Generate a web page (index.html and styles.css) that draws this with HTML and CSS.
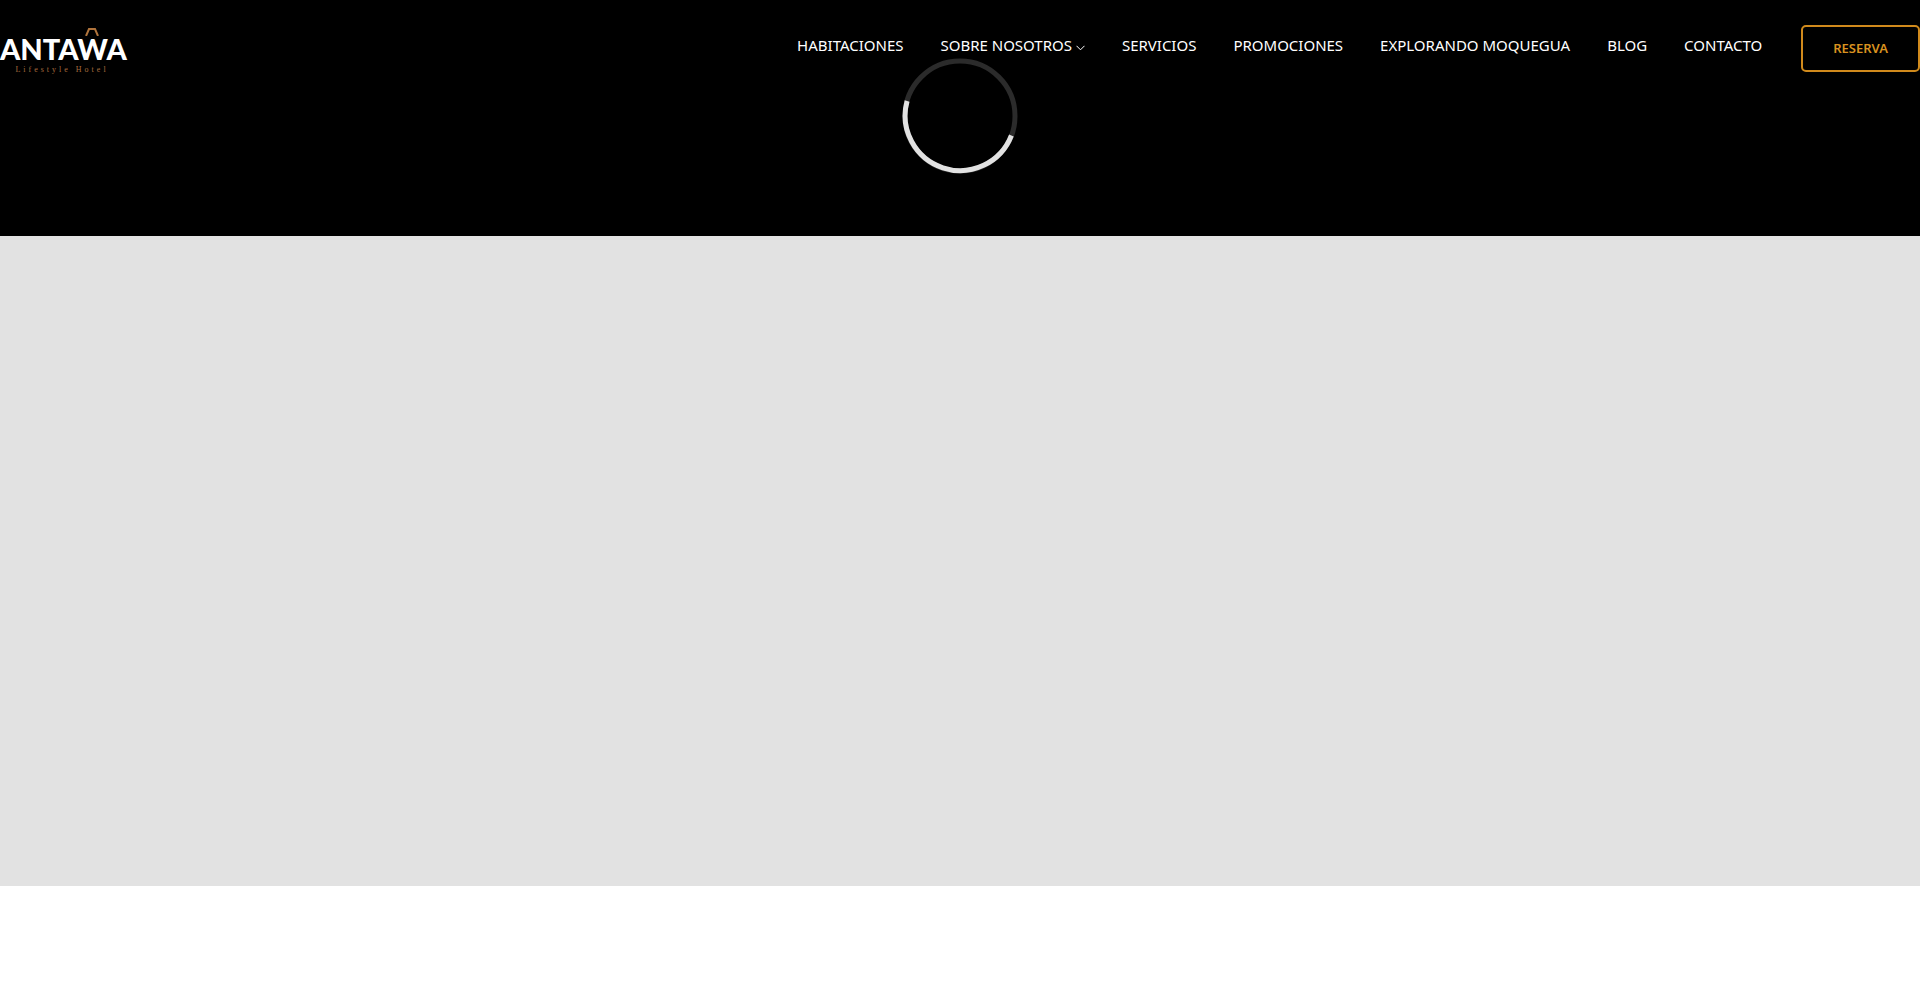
FILE: index.html
```html
<!DOCTYPE html>
<html lang="es">
<head>
  <meta charset="UTF-8">
  <meta name="viewport" content="width=device-width, initial-scale=1">
  <title>Antawa Lifestyle Hotel</title>
  <link rel="stylesheet" href="styles.css">
</head>
<body>
  <header class="header">
    <a class="logo" href="#" aria-label="Antawa Lifestyle Hotel">
      <svg class="logo-roof" viewBox="0 0 14 8" aria-hidden="true">
        <path d="M1 8L4 1H10L13 8"/>
      </svg>
      <span class="logo-name">ANTAWA</span>
      <span class="logo-tagline">Lifestyle Hotel</span>
    </a>
    <nav class="menu">
      <a href="#">HABITACIONES</a>
      <a href="#">SOBRE NOSOTROS
        <svg class="arrow" viewBox="0 0 9 6" aria-hidden="true"><path d="M0.5 0.8L4.5 4.8L8.5 0.8"/></svg>
      </a>
      <a href="#">SERVICIOS</a>
      <a href="#">PROMOCIONES</a>
      <a href="#">EXPLORANDO MOQUEGUA</a>
      <a href="#">BLOG</a>
      <a href="#">CONTACTO</a>
    </nav>
    <a class="reserva" href="#">RESERVA</a>
    <!-- loader -->
    <svg class="loader" viewBox="0 0 116 116" aria-hidden="true">
      <circle cx="58" cy="58" r="55"/>
      <path d="M5.1 43A55 55 0 0 0 109.4 77.5"/>
    </svg>
  </header>
  <main class="hero"></main>
</body>
</html>
```

FILE: styles.css
```css
body {
  margin: 0;
  background: #fff;
  font-family: "Noto Sans", sans-serif;
}
a {
  color: inherit;
  text-decoration: none;
}
.header {
  position: relative;
  display: flex;
  align-items: flex-start;
  box-sizing: border-box;
  min-height: 236px;
  padding-top: 25px;
  background: #000;
  color: #fff;
}
.logo {
  position: relative;
  display: flex;
  flex-direction: column;
  width: 124px;
  padding-top: 8px;
}
.logo-name {
  font-family: Lato, sans-serif;
  font-size: 29px;
  font-weight: 900;
  line-height: 32px;
}
.logo-tagline {
  color: #a86c3e;
  font-family: "Liberation Serif", serif;
  font-size: 8px;
  letter-spacing: 3px;
  line-height: 10px;
  text-align: center;
  white-space: nowrap;
}
.logo-roof {
  position: absolute;
  top: 3px;
  left: 85px;
  width: 14px;
  height: 8px;
  fill: none;
  stroke: #b0743c;
  stroke-width: 2;
}
.menu {
  display: flex;
  gap: 37px;
  margin-left: auto;
  margin-right: 39px;
  font-size: 15px;
  line-height: 40px;
}
.arrow {
  width: 9px;
  height: 6px;
  fill: none;
  stroke: #fff;
}
.reserva {
  padding: 0 30px;
  border: 2px solid #d08a1c;
  border-radius: 5px;
  color: #d9921f;
  font-size: 13px;
  font-weight: 600;
  line-height: 43px;
}
.loader {
  position: absolute;
  top: 58px;
  left: calc(50% - 58px);
  width: 116px;
  height: 116px;
  fill: none;
  stroke-width: 5;
}
.loader circle {
  stroke: #2b2b2b;
}
.loader path {
  stroke: #e2e2e2;
}
.hero {
  min-height: 650px;
  background: #e2e2e2;
}
```
